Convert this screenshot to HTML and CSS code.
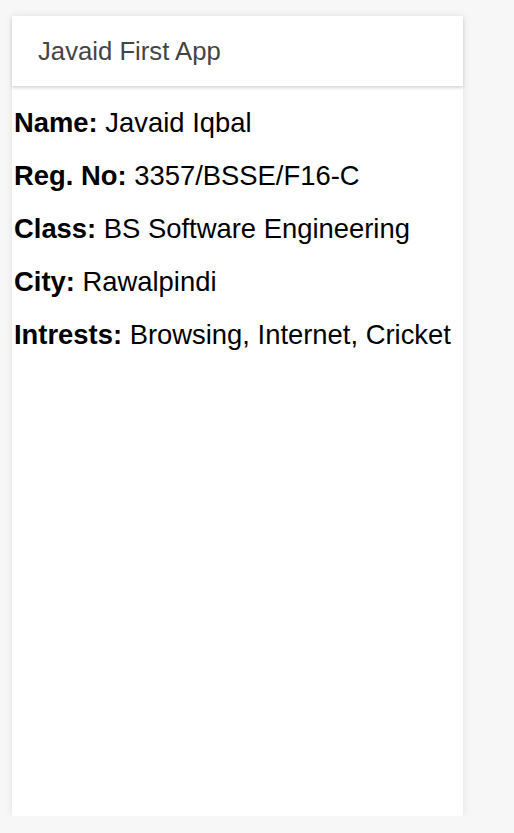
FILE: index.html
```html
<!DOCTYPE html>
<html>
<head>
<meta charset="utf-8">
<link rel="stylesheet" href="styles.css">
</head>
<body>
<div class="card">
  <header class="toolbar"><span class="title">Javaid First App</span></header>
  <main class="content">
    <p class="row"><b>Name:</b> Javaid Iqbal</p>
    <p class="row"><b>Reg. No:</b> 3357/BSSE/F16-C</p>
    <p class="row"><b>Class:</b> BS Software Engineering</p>
    <p class="row"><b>City:</b> Rawalpindi</p>
    <p class="row"><b>Intrests:</b> Browsing, Internet, Cricket</p>
  </main>
</div>
</body>
</html>
```
FILE: styles.css
```css
html, body {
  margin: 0;
  padding: 0;
  background: #f7f7f7;
  font-family: "Liberation Sans", Arial, sans-serif;
}
body {
  padding: 16px 0 0 12px;
}
.card {
  width: 451px;
  height: 800px;
  background: #fff;
  box-shadow: 0 0 8px rgba(0, 0, 0, 0.09);
  display: flex;
  flex-direction: column;
}
.toolbar {
  height: 70px;
  flex: none;
  display: flex;
  align-items: center;
  padding-left: 26px;
  box-shadow: 0 2px 3px rgba(0, 0, 0, 0.16);
  position: relative;
  z-index: 1;
}
.title {
  font-size: 25.7px;
  color: #444;
}
.content {
  display: flex;
  flex-direction: column;
  gap: 22px;
  padding: 21px 0 0 2px;
}
.row {
  margin: 0;
  font-size: 27.4px;
  line-height: 31px;
  color: #000;
}
.row b {
  font-weight: bold;
}
```
